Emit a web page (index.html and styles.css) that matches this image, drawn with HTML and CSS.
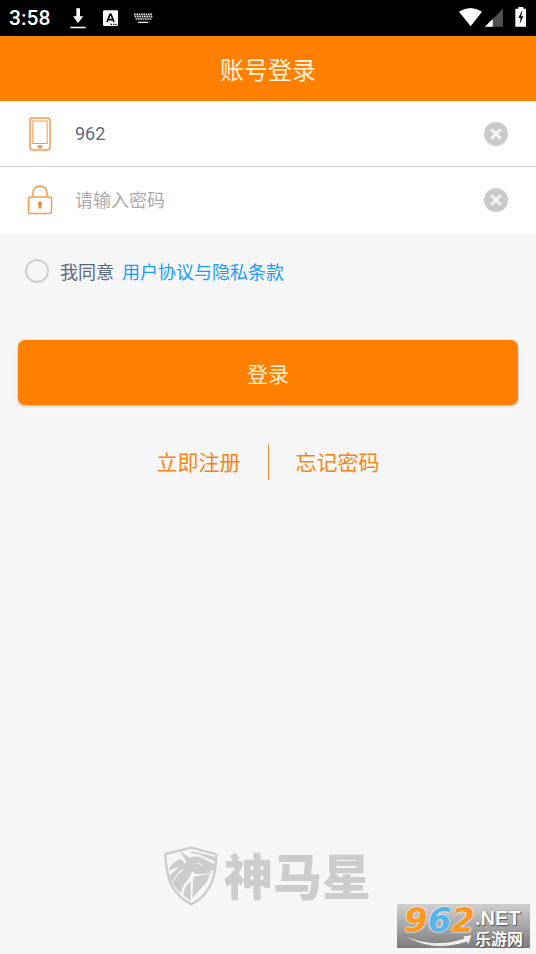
FILE: index.html
```html
<!DOCTYPE html>
<html lang="zh-CN">
<head>
<meta charset="utf-8">
<meta name="viewport" content="width=device-width, initial-scale=1">
<title>账号登录</title>
<link rel="stylesheet" href="styles.css">
</head>
<body>
<div class="status">
  <span class="time">3:58</span>
  <svg class="status-left" viewBox="204 0 264 108" aria-hidden="true">
    <path fill="#fff" d="M229 25h11v24h10L234 69 219 49h10zM211 80h46v5h-46z"/>
    <rect x="309" y="31" width="45" height="47" rx="4" fill="#fff"/>
    <path fill="none" stroke="#000" stroke-width="5" d="M321 66l9-23h3l9 23M325 59h13"/>
    <path fill="#000" d="M332 71h4v4h-4zM339 71h4v4h-4zM346 71h4v4h-4z"/>
    <path stroke="#ddd" stroke-width="5" stroke-dasharray="5 2" d="M402 43h56M404 50h53M407 57h47"/>
    <path stroke="#ddd" stroke-width="4" d="M414 67h31"/>
  </svg>
  <svg class="status-right" viewBox="54 0 210 108" aria-hidden="true">
    <path fill="#fff" d="M57 35Q91 13 126 35L92 79z"/>
    <path fill="#505050" d="M189 26v54h-54z"/>
    <path fill="#fff" d="M158 57v23h-23z"/>
    <path fill="#fff" d="M235 21h15v5h8v54h-32V26h9z"/>
    <path fill="#000" d="M245 34l-10 20h7l-3 19 11-24h-7l4-15z"/>
  </svg>
</div>
<header class="header"><h1>账号登录</h1></header>
<form class="login">
  <div class="field">
    <label for="account" aria-label="账号">
      <svg class="field-icon" viewBox="0 0 30 36" aria-hidden="true" fill="none" stroke="#f7984a">
        <rect x="5" y="2" width="20" height="32" rx="2.5" stroke-width="1.5"/>
        <rect x="7.8" y="5" width="14.4" height="22.5"/>
        <rect x="13.5" y="29.5" width="3" height="2.5" fill="#f7984a"/>
      </svg>
    </label>
    <input id="account" type="text" value="962">
    <button type="button" class="clear" aria-label="清除账号">
      <svg viewBox="0 0 24 24"><circle cx="12" cy="12" r="12"/><path d="M7.3 7.3l9.4 9.4M16.7 7.3l-9.4 9.4"/></svg>
    </button>
  </div>
  <div class="field">
    <label for="password" aria-label="密码">
      <svg class="field-icon" viewBox="0 0 30 36" aria-hidden="true" fill="none" stroke="#f7984a" stroke-width="1.5">
        <rect x="3.5" y="15" width="23" height="16.5" rx="2"/>
        <path d="M8 15V11a7 7 0 0 1 14 0V15"/>
        <path fill="#f5821f" stroke="none" d="M13 21.5a2 2 0 0 1 4 0l-1 5h-2z"/>
      </svg>
    </label>
    <input id="password" type="password" placeholder="请输入密码">
    <button type="button" class="clear" aria-label="清除密码">
      <svg viewBox="0 0 24 24"><circle cx="12" cy="12" r="12"/><path d="M7.3 7.3l9.4 9.4M16.7 7.3l-9.4 9.4"/></svg>
    </button>
  </div>
  <div class="agree">
    <input id="agree" type="checkbox">
    <label for="agree">我同意</label>
    <a href="#terms">用户协议与隐私条款</a>
  </div>
  <button type="submit" class="submit">登录</button>
</form>
<nav class="links">
  <a href="#register">立即注册</a>
  <a href="#forgot">忘记密码</a>
</nav>
<footer class="brand">
  <svg class="shield" viewBox="9 9 168 186" aria-hidden="true">
    <path fill="none" stroke="#ccc" stroke-width="7" stroke-linejoin="round" d="M16 36Q54 27 94 17Q132 27 169 37Q169 76 157 118Q138 165 94 187Q50 165 30 120Q17 80 16 36z"/>
    <path fill="#ccc" d="M58 27Q77 37 89 47Q101 42 119 44L151 61 167 68 164 83 151 87 155 92Q130 97 106 96L98 88Q88 112 70 130L62 154Q38 133 29 101L59 72 26 87Q31 62 62 50L74 64 80 60z"/>
    <path fill="#ccc" d="M94 27L168 45V60L134 45 118 37 94 35z"/>
    <path fill="#ccc" d="M92 116V176L70 160 76 136zM100 104L124 100 150 95Q144 119 126 136L97 168z"/>
    <path fill="none" stroke="#f5f5f5" stroke-width="4" d="M39 117Q52 95 69 82M113 63L127 70"/>
  </svg>
  <span class="brand-name">神马星</span>
</footer>
<aside class="watermark">
  <svg class="swoosh" viewBox="21 27 399 132" aria-hidden="true">
    <path fill="#eee" stroke="#777" stroke-width="2" d="M39 119Q130 162 222 130L218 123 246 119 236 149 230 141Q122 176 39 119z"/>
  </svg>
  <span class="mark-number">9<b>6</b>2</span>
  <span class="mark-text"><span class="mark-net">.NET</span><span class="mark-name">乐游网</span></span>
</aside>
</body>
</html>
```
FILE: styles.css
```css
* { box-sizing: border-box; }

body {
  margin: 0;
  min-height: 100vh;
  display: flex;
  flex-direction: column;
  position: relative;
  background: #f6f6f6;
  font-family: Roboto, "Noto Sans CJK SC", sans-serif;
  color: #5b6880;
}

svg { display: block; }
a { text-decoration: none; }
button, input { font: inherit; }

.status {
  display: flex;
  align-items: center;
  height: 36px;
  padding: 0 8px 0 9px;
  background: #000;
  color: #fff;
}
.time { width: 59px; font-size: 21px; font-weight: 500; }
.status-left { width: 88px; height: 36px; }
.status-right { width: 70px; height: 36px; margin-left: auto; }

.header {
  display: flex;
  align-items: center;
  justify-content: center;
  height: 65px;
  background: #ff8000;
  color: #fff3df;
}
.header h1 { margin: 0; font-size: 24px; font-weight: 400; }

.field {
  display: flex;
  align-items: center;
  height: 66px;
  padding: 0 28px 0 25px;
  background: #fff;
}
.field:first-child { border-bottom: 1px solid #d0d0d0; }
.field-icon { width: 30px; height: 36px; }
.field input {
  flex: 1;
  min-width: 0;
  margin-left: 20px;
  padding: 0;
  border: 0;
  outline: 0;
  background: none;
  color: #5b6880;
  font-size: 18px;
}
.field input::placeholder { color: #aaa; opacity: 1; }
.clear { padding: 0; border: 0; background: none; }
.clear svg { width: 24px; height: 24px; }
.clear circle { fill: #cbcbcb; }
.clear path { stroke: #fff; stroke-width: 2.5; }

.agree {
  display: flex;
  align-items: center;
  height: 76px;
  padding: 0 25px;
  font-size: 18px;
}
.agree input {
  appearance: none;
  width: 24px;
  height: 24px;
  margin: 0 11px 0 0;
  border: 2px solid #d0d0d0;
  border-radius: 50%;
}
.agree a { margin-left: 8px; color: #199cfb; }

.submit {
  display: block;
  width: calc(100% - 36px);
  height: 65px;
  margin: 31px 18px 0;
  border: 0;
  border-radius: 7px;
  background: #ff8000;
  box-shadow: 0 1px 3px #0004;
  color: #fff0da;
  font-size: 21px;
}

.links {
  display: flex;
  justify-content: center;
  margin-top: 39px;
  font-size: 21px;
  line-height: 38px;
}
.links a { height: 36px; padding: 0 27px; color: #f78610; }
.links a + a { border-left: 1px solid #e58a2c; }

.brand {
  display: flex;
  align-items: center;
  justify-content: center;
  gap: 5px;
  margin: auto 0 47px;
  padding-right: 2px;
  color: #ccc;
}
.shield { width: 56px; height: 62px; }
.brand-name { font: 900 49px/49px "Noto Sans CJK SC", sans-serif; padding-bottom: 5px; }

.watermark {
  position: absolute;
  right: 6px;
  bottom: 6px;
  display: flex;
  width: 133px;
  height: 44px;
  padding-left: 7px;
  background: linear-gradient(#cfcfcf, #7c7c7c);
  color: #fff;
}
.swoosh { position: absolute; inset: 0; width: 133px; height: 44px; }
.mark-number {
  width: 71px;
  color: #ff9820;
  font: italic 700 34px/32px "DejaVu Sans", sans-serif;
  text-shadow: 0 0 2px #fff, 0 0 2px #fff;
}
.mark-number b { color: #58b5ec; }
.mark-text {
  display: flex;
  flex-direction: column;
  text-shadow: 0 0 1px #555, 1px 1px 1px #555;
}
.mark-net { padding-top: 4px; font: 700 20px/20px "Liberation Sans", sans-serif; }
.mark-name { font: 700 16px/20px "Noto Sans CJK SC", sans-serif; }
```
